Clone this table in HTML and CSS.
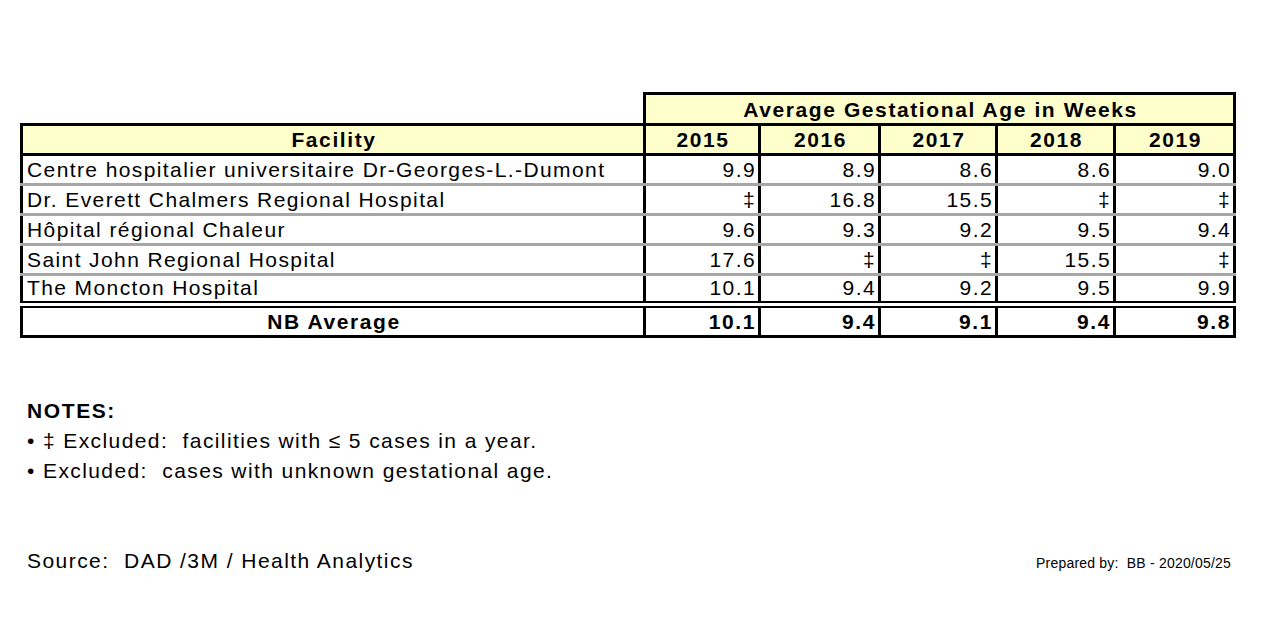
FILE: index.html
```html
<!DOCTYPE html>
<html lang="en">
<head>
<meta charset="utf-8">
<title>Average Gestational Age in Weeks</title>
<link rel="stylesheet" href="styles.css">
</head>
<body>
<div class="page">
  <table class="data">
    <colgroup>
      <col class="c-fac">
      <col class="c-y1">
      <col class="c-y2">
      <col class="c-y3">
      <col class="c-y4">
      <col class="c-y5">
    </colgroup>
    <thead>
      <tr class="r-group">
        <th class="blank"></th>
        <th class="group" colspan="5">Average Gestational Age in Weeks</th>
      </tr>
      <tr class="r-years">
        <th class="fac-h">Facility</th>
        <th>2015</th>
        <th>2016</th>
        <th>2017</th>
        <th>2018</th>
        <th>2019</th>
      </tr>
    </thead>
    <tbody>
      <tr class="first">
        <td class="name">Centre hospitalier universitaire Dr-Georges-L.-Dumont</td>
        <td>9.9</td><td>8.9</td><td>8.6</td><td>8.6</td><td>9.0</td>
      </tr>
      <tr>
        <td class="name">Dr. Everett Chalmers Regional Hospital</td>
        <td>‡</td><td>16.8</td><td>15.5</td><td>‡</td><td>‡</td>
      </tr>
      <tr>
        <td class="name">Hôpital régional Chaleur</td>
        <td>9.6</td><td>9.3</td><td>9.2</td><td>9.5</td><td>9.4</td>
      </tr>
      <tr>
        <td class="name">Saint John Regional Hospital</td>
        <td>17.6</td><td>‡</td><td>‡</td><td>15.5</td><td>‡</td>
      </tr>
      <tr class="last">
        <td class="name">The Moncton Hospital</td>
        <td>10.1</td><td>9.4</td><td>9.2</td><td>9.5</td><td>9.9</td>
      </tr>
    </tbody>
    <tfoot>
      <tr class="total">
        <td class="name">NB Average</td>
        <td>10.1</td><td>9.4</td><td>9.1</td><td>9.4</td><td>9.8</td>
      </tr>
    </tfoot>
  </table>

  <div class="notes">
    <div class="notes-title">NOTES:</div>
    <div class="note">• ‡ Excluded:  facilities with ≤ 5 cases in a year.</div>
    <div class="note">• Excluded:  cases with unknown gestational age.</div>
  </div>

  <div class="footer">
    <div class="source">Source:  DAD /3M / Health Analytics</div>
    <div class="prepared">Prepared by:  BB - 2020/05/25</div>
  </div>
</div>
</body>
</html>
```
FILE: styles.css
```css
html, body {
  margin: 0;
  padding: 0;
  background: #ffffff;
}

body {
  font-family: "Liberation Sans", Arial, sans-serif;
  color: #000000;
  width: 1272px;
  height: 628px;
  overflow: hidden;
}

.page {
  padding: 92px 0 0 20px;
}

.data {
  border-collapse: collapse;
  table-layout: fixed;
  width: 1216px;
  font-size: 21px;
  letter-spacing: 1.4px;
}

.c-fac { width: 623px; }
.c-y1 { width: 115px; }
.c-y2 { width: 120px; }
.c-y3 { width: 117px; }
.c-y4 { width: 118px; }
.c-y5 { width: 120px; }

.data th,
.data td {
  padding: 0 2px 0 4px;
  line-height: 22px;
  white-space: nowrap;
}

.data th {
  background: #ffffcc;
  border: 3px solid #000000;
  font-weight: bold;
  letter-spacing: 1.6px;
  text-align: center;
  vertical-align: bottom;
  padding-bottom: 2px;
}

.data th.blank {
  background: transparent;
  border: none;
}

.r-group { height: 31px; }
.r-years { height: 30px; }

.data td {
  text-align: right;
  vertical-align: bottom;
  border-left: 3px solid #000000;
  border-right: 3px solid #000000;
  border-bottom: 3px solid #a6a6a6;
  padding-bottom: 2px;
}

.data td.name {
  text-align: left;
}

.data tbody tr { height: 30px; }

.data tr.first td { border-top: 3px solid #000000; }

.data tr.last td { border-bottom: 7px double #000000; }

.data tr.total { height: 32px; }

.data tr.total td {
  font-weight: bold;
  letter-spacing: 1.6px;
  border-top: 7px double #000000;
  border-bottom: 3px solid #000000;
}

.data tr.total td.name {
  text-align: center;
}

.notes {
  margin-top: 58px;
  padding-left: 7px;
  font-size: 21px;
  letter-spacing: 1.4px;
  line-height: 30px;
}

.notes-title {
  font-weight: bold;
  letter-spacing: 1.6px;
}

.note {
  white-space: pre;
}

.footer {
  margin-top: 63px;
  display: flex;
  align-items: baseline;
  justify-content: space-between;
  padding-left: 7px;
  width: 1204px;
}

.source {
  font-size: 21px;
  letter-spacing: 1.45px;
  white-space: pre;
}

.prepared {
  font-size: 14px;
  letter-spacing: 0.2px;
  white-space: pre;
}
```
